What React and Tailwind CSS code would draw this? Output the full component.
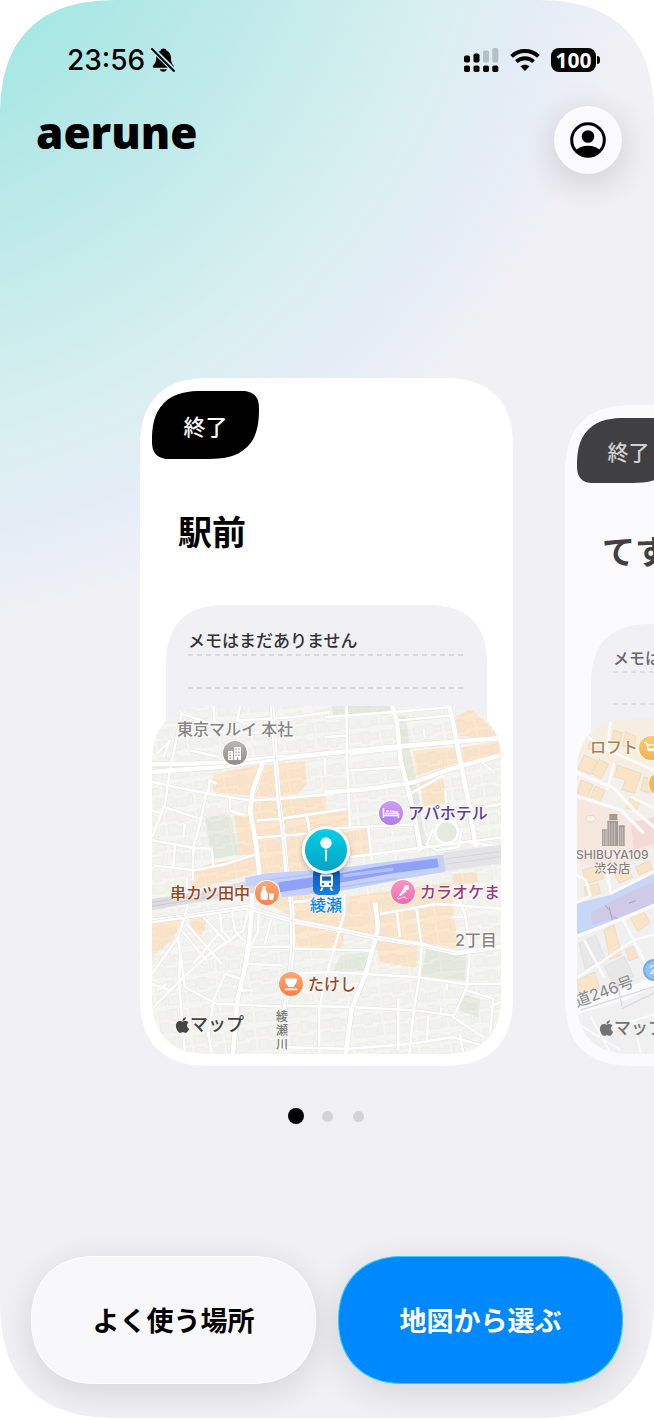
import React from "react";

const squircle = "[corner-shape:superellipse(1.35)]";

const roadsMajor = [
  "M6 214 L200 200 400 172 540 158 720 140 1060 112",
  "M0 192 L110 190 240 186 400 168",
  "M366 10 L372 100 378 190 386 300 400 400 412 540 426 620 428 740 418 840 402 940 392 1070",
  "M338 188 L308 270 300 330 318 430 330 530",
  "M0 662 L110 648 200 634 290 620 430 662 540 682 680 712 800 730 920 758 1060 738",
  "M525 276 L650 266 790 246 900 206 1060 162",
  "M675 605 L684 680 670 740 645 825 605 925 586 1070",
  "M725 10 L740 60 752 180 790 330 812 450",
  "M895 10 L908 60 930 180 955 300 978 440",
  "M310 545 L300 700 285 800 262 900 248 1070",
];

const roadsMinor = [
  "M70 10 L95 40 60 210 45 310 6 410",
  "M95 40 L190 72 M190 10 L195 80 225 100 M270 15 L262 60 300 75 M40 170 L60 120 20 160",
  "M120 150 L210 170 M225 100 L370 95 M262 60 L430 50 540 35",
  "M6 245 L150 275 300 300 M170 275 L150 370 130 440 128 540 M45 320 L150 355",
  "M10 420 L130 442 185 445 190 500 M130 510 L230 490 320 460 M75 430 L70 500 M10 495 L125 508",
  "M300 300 L385 295 550 280 M320 360 L390 355 590 325 M318 412 L400 405 470 400 M470 345 L480 400",
  "M175 275 L178 240 200 250 M105 370 L100 410 M240 290 L240 330 285 345",
  "M525 50 L730 35 900 20 M525 110 L590 105 M590 10 L590 160 600 380",
  "M600 160 L740 145 M600 210 L750 200 M745 60 L900 45 M825 110 L820 85 M525 175 L525 225",
  "M525 385 L660 378 790 372 M655 378 L665 480 M600 470 L830 440 1060 410",
  "M770 285 L880 225 M885 270 L890 310 M990 180 L1025 210 M940 330 L1060 310",
  "M850 385 L830 430 860 450 925 440 935 390 M1050 440 L960 425",
  "M110 530 L112 620 85 710 6 820 M85 720 L105 860 M6 925 L100 830 180 760 280 690 300 610",
  "M95 690 L170 780 M110 670 L215 790 M130 790 L205 700 M160 650 L230 725 M210 640 L215 690 245 720",
  "M245 625 L255 690 280 720 M325 640 L325 690 300 740 M365 650 L345 730 M290 740 L430 738",
  "M105 860 L200 910 395 918 M90 740 L88 860 105 1060 M190 905 L175 1000 185 1060",
  "M225 820 L190 900 M225 820 L270 835 M290 790 L395 795 M270 870 L310 870 M6 850 L60 870",
  "M415 820 L540 815 640 820 800 830 940 850 1060 850 M400 915 L610 920 800 930 910 945",
  "M400 1040 L590 1045 780 1030 910 1010 1050 1050",
  "M585 580 L582 640 560 720 530 820 508 920 508 1060 M690 640 L750 630 860 610 1060 625",
  "M740 630 L750 710 M800 625 L815 740 808 830 790 940 778 1060",
  "M910 560 L945 640 960 740 M905 650 L940 650 M960 760 L950 860 910 950 1000 1010",
  "M745 895 L745 1050 M835 945 L830 1020 M870 945 L875 920 M950 870 L1030 895 1020 1000",
  "M1020 920 L1060 900 M890 850 L890 870 M430 744 L660 750 M930 1000 L940 1060",
  "M6 330 L40 340 M20 870 L50 850 M300 745 L288 800 M430 605 L580 590",
];

const commercial = [
  "188 222 340 190 300 285 190 275",
  "345 195 465 182 470 250 445 280 380 290 315 290",
  "310 300 525 280 530 330 595 325 598 372 470 400 560 500 325 520 310 420",
  "252 345 298 345 314 460 268 465",
  "125 510 180 490 312 465 328 515 120 570",
  "6 660 100 645 70 715 6 770",
  "110 640 170 640 165 690 140 720",
  "320 590 560 580 580 640 580 750 440 735 430 650",
  "915 50 965 25 1060 120 925 105",
  "790 150 912 140 930 185 800 225",
  "935 140 1060 120 1060 160 940 190",
  "810 245 878 225 892 310 820 318",
  "560 396 655 385 662 465 590 478",
  "580 590 900 545 925 745 805 725 800 802 690 785 670 710 580 690",
  "905 520 980 515 985 545 910 555",
];

const parks = [
  "165 350 240 342 268 462 185 475",
  "545 12 730 12 730 34 550 46",
  "738 48 768 46 780 150 800 250 818 380 840 440 800 445 772 270 745 180",
  "572 765 662 755 650 812 550 812",
  "830 745 948 752 945 840 812 828",
  "935 880 990 895 985 950 930 930",
];

function AyaseStreets() {
  return (
    <svg viewBox="6 15 1047 1047" className="block h-full w-full" preserveAspectRatio="xMidYMid slice" aria-hidden="true">
      <defs>
        <pattern id="blocks" width="96" height="84" patternUnits="userSpaceOnUse" patternTransform="rotate(-7)">
          <path d="M6 8h30v22H6zM42 4h22v34H42zM70 12h20v18H70zM8 42h26v30H8zM40 50h34v24H40zM80 42h12v28H80z" fill="#000" fillOpacity=".012" stroke="#54452a" strokeOpacity=".07" strokeWidth="1.5" />
        </pattern>
      </defs>
      <rect width="1070" height="1080" fill="#f5f5f1" />
      {parks.map((p) => <polygon key={p} points={p} fill="#e7ebe0" />)}
      {commercial.map((p) => <polygon key={p} points={p} fill="#fce7cd" />)}
      <rect width="1070" height="1080" fill="url(#blocks)" />
      <g fill="none" strokeLinejoin="round">
        <g stroke="#e0dfda">
          {roadsMinor.map((d) => <path key={d} d={d} strokeWidth="10" />)}
          {roadsMajor.map((d) => <path key={d} d={d} strokeWidth="17" />)}
        </g>
        <g stroke="#fff">
          {roadsMinor.map((d) => <path key={d} d={d} strokeWidth="8" />)}
          {roadsMajor.map((d) => <path key={d} d={d} strokeWidth="14" />)}
        </g>
        <path d="M0 202 L200 194 400 170 M0 662 L290 620 430 662 680 712 920 758 M366 10 L378 190 400 400 426 620 428 740 392 1070" stroke="#e2e1dd" strokeWidth="2" />
      </g>
      <circle cx="890" cy="395" r="34" fill="#e4eade" stroke="#fff" strokeWidth="8" />
      <path d="M0 596 L110 580 300 540 420 545 420 580 300 578 100 612 0 630z" fill="#dddddf" />
      <path d="M0 606 L110 590 300 552 M0 618 L110 601 300 564" stroke="#c9c9ce" strokeWidth="3" fill="none" />
      <path d="M880 456 L1060 432 1060 488 880 512z" fill="#e4e4e6" />
      <path d="M880 476 L1060 452 M880 492 L1060 468" stroke="#d6d6da" strokeWidth="3" />
      <path d="M285 532 L350 518 560 504 880 462 886 514 780 532 600 566 480 582 395 590 390 560 290 556z" fill="#c6d0fb" />
      <path d="M385 545 L560 520 720 492 862 474 866 500 720 520 560 548 390 575z" fill="#8fa2f8" />
      <path d="M580 526 L730 506" stroke="#b0bffb" strokeWidth="10" />
      <path d="M340 540 L560 512 M480 574 L740 534" stroke="#b4c0f8" strokeWidth="4" />
    </svg>
  );
}

function ShibuyaStreets() {
  return (
    <svg viewBox="69 57 1005 1005" className="block h-full w-full" preserveAspectRatio="xMidYMid slice" aria-hidden="true">
      <rect width="1080" height="1080" fill="#f5f1ea" />
      <path d="M60 50h300v220L60 200z" fill="#faeedb" />
      <path d="M60 290 L190 320 300 400 300 440 180 520 60 480z" fill="#f9e4da" />
      <path d="M230 370 L300 350 300 430 240 450z" fill="#f6d2cc" />
      <path d="M60 700 L300 600 300 1070 60 1070z" fill="#f0f0ef" />
      <g fill="#fce0b8" stroke="#dcc39c" strokeWidth="1.5">
        <path d="M90 165l40 18-20 40-38-16zM136 178l28 14-22 44-28-14zM80 240l38 14-18 40-30-12zM124 258l30 14-20 42-30-14zM190 195l72 25-20 60-38-10 10-30-32-10zM180 90l24 8-8 40-26-6zM215 95l32 14-8 36-34-8zM230 290l30 12-14 32-30-10zM270 230l28 10v40l-38-8zM110 120l36 4-10 30-34-8z" />
        <path d="M85 510l50-14 14 40-54 16zM92 560l40-10 8 30-46 14zM180 520l40-16 16 28-40 18zM245 500l40-18 10 26-40 18zM150 690l30-16 22 90-34 14zM222 642l40-22 26 48-36 26zM70 840l52-24 14 48-60 20zM215 750l22-12 14 36-26 8z" />
      </g>
      <path d="M75 730l50-24 28 70-60 30z M150 800l60-30 30 60-60 26z" fill="#e6e6e5" stroke="#d3d3d1" strokeWidth="2" />
      <path d="M60 612 L170 585 300 520 300 620 190 660 60 712z" fill="#b9cff9" />
      <path d="M110 640 L195 590 300 545 300 612 200 650 115 675z" fill="#c4bce5" />
      <path d="M165 620l10 40M163 628l-8-12M176 650l16 6M225 610l20-8" stroke="#6d6796" strokeWidth="2" fill="none" />
      <g fill="none" stroke="#fff" strokeLinejoin="round">
        <path d="M60 215 L180 265 240 330 310 390 M60 285 L200 330 270 400 M60 712 L200 658 310 612" strokeWidth="10" />
        <path d="M100 110 L160 150 310 215 M160 150 L170 60 M180 190 L160 270 M310 330 L230 290 M110 590 L95 540 60 520 M60 612 L105 590 M160 520 L170 580 L310 510 M60 840 L240 720 310 700 M205 655 L280 800 M90 720 L150 830" strokeWidth="8" />
        <path d="M60 930 L200 890 310 840" strokeWidth="30" />
        <path d="M70 970 L200 1050 M110 950 L170 1060 M180 980 L310 940 M240 960 L260 1060" strokeWidth="6" />
      </g>
      <path d="M190 850l14 70M80 930l220-70M205 925l95-46" stroke="#d3d3d4" strokeWidth="4" />
      <ellipse cx="110" cy="356" rx="14" ry="10" fill="#faf5dd" stroke="#d2c7a5" strokeWidth="2" />
      <g fill="#857e72">
        <path d="M166 342h24v18h-24zM160 362h32v76h-32zM144 388h14v50h-14zM194 376h18v62h-18z" />
        <path d="M166 368v68M174 368v68M182 368v68M148 392v44M154 392v44M200 382v54M206 382v54" stroke="#d9d3c8" strokeWidth="2" />
      </g>
    </svg>
  );
}

function Poi({ className, children }) {
  return (
    <span className={`absolute flex size-6 items-center justify-center rounded-full text-white shadow-[0_0_0_1px_rgba(255,255,255,0.9)] ${className}`}>
      {children}
    </span>
  );
}

const labelBase =
  "absolute whitespace-nowrap text-base leading-5 [text-shadow:0_0_2px_#fff,0_0_2px_#fff,0_0_3px_#fff]";

function AppleMaps({ className }) {
  return (
    <span className={`absolute flex items-center font-medium whitespace-nowrap text-[#454545] ${className}`}>
      <svg viewBox="0 0 384 512" className="h-[18px] w-[15px]" fill="currentColor" aria-hidden="true">
        <path d="M318.7 268.7c-.2-36.7 16.4-64.4 50-84.8-18.8-26.9-47.2-41.7-84.7-44.6-35.5-2.8-74.3 20.7-88.5 20.7-15 0-49.4-19.7-76.4-19.7C63.3 141.2 4 184.8 4 273.5q0 39.3 14.4 81.2c12.8 36.7 59 126.7 107.2 125.2 25.2-.6 43-17.9 75.8-17.9 31.8 0 48.3 17.9 76.4 17.9 48.6-.7 90.4-82.5 102.6-119.3-65.2-30.7-61.7-90-61.7-91.9zm-56.6-164.2c27.3-32.4 24.8-61.9 24-72.5-24.1 1.4-52 16.4-67.9 34.9-17.5 19.8-27.8 44.3-25.6 71.9 26.1 2 49.9-11.4 69.5-34.3z" />
      </svg>
      マップ
    </span>
  );
}

function AyaseMap() {
  return (
    <div className={`relative h-[348px] overflow-hidden rounded-[60px] ${squircle}`}>
      <AyaseStreets />
      <span className={`${labelBase} top-[13px] left-[25px] font-medium text-[#858585]`}>東京マルイ 本社</span>
      <Poi className="top-[35px] left-[71px] bg-linear-to-b from-[#b9b7b5] to-[#8f8c89]">
        <svg viewBox="0 0 16 16" className="size-4" fill="#fff" aria-hidden="true">
          <path fillRule="evenodd" d="M1 6h5v9H1zM7 2h7v13H7zM2.4 7.4v1.2h1.8V7.4zM2.4 10v1.2h1.8V10zM2.4 12.5v1.2h1.8v-1.2zM8.4 3.5v1.5h1.4V3.5zM11.2 3.5v1.5h1.4V3.5zM8.4 6.5v1.5h1.4V6.5zM11.2 6.5v1.5h1.4V6.5zM8.4 9.5v1.5h1.4V9.5zM11.2 9.5v1.5h1.4V9.5zM9.8 12.5v2.5h1.4v-2.5z" />
        </svg>
      </Poi>
      <Poi className="top-[95px] left-[227px] bg-linear-to-b from-[#cfa0f5] to-[#ad7ce6]">
        <svg viewBox="0 0 18 12" className="h-3 w-[18px]" fill="none" stroke="#fff" strokeWidth="1.5" aria-hidden="true">
          <path d="M1.5 1v10M1.5 8.5h15M16.5 6.5V11M3 6.5h13.5" />
          <path d="M4 4.3h3M8 4.3l8 .8" />
        </svg>
      </Poi>
      <span className={`${labelBase} top-[97px] left-[256px] font-medium text-[#5b3d96]`}>アパホテル</span>
      <span className={`${labelBase} top-[177px] left-[18px] font-medium text-[#97461f]`}>串カツ田中</span>
      <Poi className="top-[175px] left-[103px] bg-linear-to-b from-[#ffa774] to-[#fa8148]">
        <svg viewBox="0 0 16 16" className="size-4" fill="#fff" aria-hidden="true">
          <path d="M3.5 1h3.2v3.5c0 1 2 2.2 2 4.5v4.5c0 .8-.6 1.5-1.4 1.5H3c-.8 0-1.4-.7-1.4-1.5V9c0-2.3 1.9-3.5 1.9-4.5zM9.8 8.5h5.2l-.6 5.5c-.1.6-.5 1-1 1h-2c-.5 0-.9-.4-1-1z" />
        </svg>
      </Poi>
      <Poi className="top-[174px] left-[239px] bg-linear-to-b from-[#fc94c8] to-[#f06cac]">
        <svg viewBox="0 0 16 16" className="size-4" fill="#fff" aria-hidden="true">
          <circle cx="11.5" cy="3.5" r="2.6" />
          <path d="M8.7 4.2l2.9 2.9-6.2 5.2-1.3-1.3z" />
          <path d="M4.5 11.5c-3 2.5-2 4 1 2.8s5-2 6.5.7" fill="none" stroke="#fff" strokeWidth="1" />
        </svg>
      </Poi>
      <span className={`${labelBase} top-[176px] left-[268px] font-medium text-[#9c3b78]`}>カラオケま</span>
      <span className="absolute top-[162px] left-[161px] flex h-[27px] w-[27px] items-end justify-center rounded-md bg-linear-to-b from-[#0d54ad] to-[#1680ea] pb-[3px]">
        <svg viewBox="0 0 16 16" className="size-[19px]" fill="#fff" aria-hidden="true">
          <path fillRule="evenodd" d="M4 1h8c1 0 1.5.7 1.5 1.5V10c0 1-.7 1.7-1.5 1.7H4c-.8 0-1.5-.7-1.5-1.7V2.5C2.5 1.7 3 1 4 1zm.3 2v3.5h7.4V3zM5 8.3a1 1 0 1 0 .01 0zM11 8.3a1 1 0 1 0 .01 0z" />
          <path d="M3.8 12.2h1.8l-1.4 3H2.4zM12.2 12.2h-1.8l1.4 3h1.8z" />
        </svg>
      </span>
      <span className="absolute top-[120px] left-[150px] flex size-12 items-center justify-center rounded-full border-[3px] border-white bg-linear-to-b from-[#00cfe6] to-[#05a3c4] shadow-[0_2px_5px_rgba(0,0,0,0.25)]">
        <svg viewBox="0 0 14 28" className="h-7 w-[14px]" fill="#fff" aria-hidden="true">
          <circle cx="7" cy="7" r="5.7" />
          <path d="M5.9 13.5h2.2l-.3 11c-.2 1.5-1.4 1.5-1.6 0z" />
        </svg>
      </span>
      <span className={`${labelBase} top-[189px] left-[158px] font-medium text-[#0a84e8]`}>綾瀬</span>
      <Poi className="top-[266px] left-[127px] bg-linear-to-b from-[#ffa774] to-[#fa8148]">
        <svg viewBox="0 0 16 16" className="size-4" fill="#fff" aria-hidden="true">
          <path d="M2 2.5h12c0 4-1.5 6-3 7.2V11H5V9.7C3.5 8.5 2 6.5 2 2.5zM1.8 12.5h12.4v1.8H1.8z" />
        </svg>
      </Poi>
      <span className={`${labelBase} top-[268px] left-[156px] font-medium text-[#97461f]`}>たけし</span>
      <span className={`${labelBase} top-[224px] left-[303px] font-medium text-[#858585]`}>2丁目</span>
      <span className="absolute top-[304px] left-[124px] w-3 text-xs leading-[14px] font-medium text-[#777] [text-shadow:0_0_2px_#fff]">綾瀬川</span>
      <AppleMaps className="top-[307px] left-[23px] text-lg leading-6" />
    </div>
  );
}

function ShibuyaMap() {
  return (
    <div className={`relative h-[335px] overflow-hidden rounded-[58px] ${squircle}`}>
      <ShibuyaStreets />
      <span className={`${labelBase} top-[18px] left-[13px] font-medium text-[#8a5a10]`}>ロフト</span>
      <Poi className="top-[17px] left-[62px] bg-linear-to-b from-[#ffbe3d] to-[#f79a14]">
        <svg viewBox="0 0 16 16" className="size-4" fill="none" stroke="#fff" strokeWidth="1.6" aria-hidden="true">
          <path d="M1 2.5h2.5l2 8h7.5M4.5 5h10l-1.5 4H5.5M6.5 13.5h.1M12 13.5h.1" />
        </svg>
      </Poi>
      <Poi className="top-[53px] left-[72px] bg-[#f9a01c]" />
      <span className="absolute top-[129px] left-[-1px] flex flex-col items-center text-xs leading-[14px] font-medium whitespace-nowrap text-[#5f594f] [text-shadow:0_0_2px_#fff,0_0_2px_#fff]">
        <span>SHIBUYA109</span>
        <span>渋谷店</span>
      </span>
      <span className="absolute top-[262px] left-[-4px] -rotate-[20deg] text-base leading-5 whitespace-nowrap text-[#666]">道246号</span>
      <span className="absolute top-[240px] left-[66px] flex h-[22px] w-7 items-center rounded-full border-2 border-[#4a93ea] bg-[#6eb2f6] pl-1 text-xs text-white">246</span>
      <AppleMaps className="top-[297px] left-[22px] text-[17px] leading-6" />
    </div>
  );
}

const dashes = "h-[2px] bg-[repeating-linear-gradient(90deg,#d7d6dc_0_5px,transparent_5px_9px)]";

function PlaceCard({ active, title, children }) {
  const s = active
    ? {
        card: "w-[373px] rounded-[72px]",
        badge: "h-[68px] w-[107px] pt-1 text-[22px] text-white",
        title: "mt-[54px] ml-[26px] text-[34px]",
        memo: "mt-[52px] pt-6 mx-[14px] text-[17px]",
        gap: "mt-[31px]",
        map: "-mt-[49px]",
      }
    : {
        card: "w-[359px] rounded-[70px] opacity-[0.73]",
        badge: "h-[65px] w-[103px] pt-1 text-[21px] text-[#c4c4c4]",
        title: "mt-[49px] ml-[25px] text-[33px]",
        memo: "mt-[52px] pt-[22px] mx-[14px] text-[16px]",
        gap: "mt-[30px]",
        map: "-mt-[52px]",
      };
  return (
    <article className={`flex shrink-0 flex-col bg-white px-3 pt-[13px] pb-3 ${squircle} ${s.card}`}>
      <span className={`flex items-center justify-center rounded-tl-[50px] rounded-tr-[18px] rounded-br-[50px] rounded-bl-[18px] bg-black font-medium ${squircle} ${s.badge}`}>
        終了
      </span>
      <h2 className={`leading-10 font-bold whitespace-nowrap text-black ${s.title}`}>{title}</h2>
      <section className={`rounded-t-[62px] bg-[#f1f0f5] px-[22px] pb-[66px] ${squircle} ${s.memo}`}>
        <p className="leading-6 font-medium text-[#333]">メモはまだありません</p>
        <div className={`mt-px ${dashes}`} />
        <div className={`${s.gap} ${dashes}`} />
      </section>
      <div className={s.map}>{children}</div>
    </article>
  );
}

function StatusBar() {
  return (
    <div className="flex h-[28px] items-center justify-between pr-[54px] pl-[67px] font-[Inter,sans-serif]">
      <div className="flex items-center gap-[6px]">
        <span className="text-[28px] leading-7 font-medium">23:56</span>
        <svg viewBox="0 0 24 26" className="h-[26px] w-6" aria-label="消音">
          <path d="M12.5 1.5c1.7 0 2.9.9 3.1 2.2 3 1.1 4.4 3.7 4.4 7 0 4.6 1.2 6.3 2.6 8 .6.9.3 2-.7 2H2.7c-1 0-1.3-1.1-.7-2 1.8-2.2 3.2-3.5 3.2-8 0-3.3 1.4-5.9 4.3-7 .2-1.3 1.4-2.2 3-2.2zM8.8 22.3h7c-.3 1.6-1.7 2.5-3.5 2.5s-3.2-.9-3.5-2.5z" />
          <path d="M1.5 2L24 24.5" stroke="#b9e8e8" strokeWidth="5" />
          <path d="M1 2L23 24" stroke="#000" strokeWidth="1.9" strokeLinecap="round" />
        </svg>
      </div>
      <div className="flex items-center">
        <svg viewBox="0 0 35 25" className="h-[25px] w-[35px]" aria-label="電波">
          <rect x="0" y="7.5" width="6" height="7" rx="1.8" />
          <rect x="9.5" y="5.5" width="6" height="9" rx="1.8" />
          <rect x="19" y="2.5" width="6" height="12" rx="1.8" fill="#b5c0c6" />
          <rect x="28.3" y="0" width="6" height="14.5" rx="1.8" fill="#b5c0c6" />
          <rect x="0" y="17.5" width="6" height="6.5" rx="1.8" />
          <rect x="9.5" y="17.5" width="6" height="6.5" rx="1.8" />
          <rect x="19" y="17.5" width="6" height="6.5" rx="1.8" />
          <rect x="28.3" y="17.5" width="6" height="6.5" rx="1.8" />
        </svg>
        <svg viewBox="0 0 30 22" className="ml-[11px] h-[22px] w-[30px]" aria-label="Wi-Fi">
          <path d="M15 22l-4.6-4.7c2.5-2.2 6.7-2.2 9.2 0z" />
          <path d="M1.6 7.4c7.4-7.2 19.4-7.2 26.8 0M6.4 12.7c4.8-4.6 12.4-4.6 17.2 0" fill="none" stroke="#000" strokeWidth="3.9" />
        </svg>
        <span className="ml-[11px] flex h-6 w-[45px] items-center justify-center rounded-lg bg-black font-[Open_Sans,sans-serif] text-[21px] leading-6 font-bold text-white">100</span>
        <span className="ml-px h-2 w-[3px] rounded-r-full bg-black" />
      </div>
    </div>
  );
}

export default function App() {
  return (
    <div className="bg-white pb-[2px] font-[Inter,'Noto_Sans_CJK_JP',sans-serif] text-black">
      <main
        className={`flex w-full flex-col overflow-hidden rounded-[122px] bg-[#f1f0f5] bg-[radial-gradient(circle_at_-150px_-160px,#a5e7e4_250px,#bbe9e8_400px,#c9ecec_500px,#daeff1_620px,#e3ecf5_700px,#e9eef7_745px,#f1f0f5_800px)] pt-[46px] pb-[34px] ${squircle}`}
      >
        <StatusBar />
        <header className="mt-8 flex h-[68px] items-center justify-between pr-8 pl-9">
          <h1 className="pb-4 font-[Open_Sans,sans-serif] text-[44px] leading-[48px] font-extrabold">
            aerune
          </h1>
          <button type="button" aria-label="プロフィール" className="flex size-[68px] items-center justify-center rounded-full bg-[#fbfbfd] shadow-[0_8px_36px_rgba(0,0,0,0.16)]">
            <svg viewBox="0 0 36 36" className="size-9" aria-hidden="true">
              <defs>
                <clipPath id="avatar"><circle cx="18" cy="18" r="17" /></clipPath>
              </defs>
              <g clipPath="url(#avatar)">
                <path d="M5 29c3-3.5 8-5.2 13-5.2s10 1.7 13 5.2v8H5z" />
              </g>
              <circle cx="18" cy="14.5" r="6.3" />
              <circle cx="18" cy="18" r="16.3" fill="none" stroke="#000" strokeWidth="3" />
            </svg>
          </button>
        </header>

        <div className="mt-[204px] flex items-end gap-[52px] overflow-hidden pl-[140px]">
          <PlaceCard active title="駅前"><AyaseMap /></PlaceCard>
          <PlaceCard title="てすと"><ShibuyaMap /></PlaceCard>
        </div>

        <nav aria-label="ページ" className="mt-[42px] flex h-4 justify-center gap-[15px]">
          <button type="button" aria-label="1" className="size-4 rounded-full bg-black" />
          <button type="button" aria-label="2" className="flex size-4 items-center justify-center"><span className="size-[11px] rounded-full bg-[#d4d3d8]" /></button>
          <button type="button" aria-label="3" className="flex size-4 items-center justify-center"><span className="size-[11px] rounded-full bg-[#d4d3d8]" /></button>
        </nav>

        <div className="mt-[132px] grid grid-cols-2 gap-[22px] px-[31px] text-[27px]">
          <button type="button" className="h-32 rounded-[70px] border border-white bg-[#f8f8fb] pt-1 font-bold text-black shadow-[0_8px_36px_rgba(0,0,0,0.12)] [corner-shape:superellipse(1.15)]">
            よく使う場所
          </button>
          <button type="button" className="h-32 rounded-[70px] border border-[#2fd0ff] bg-[#0088ff] pt-1 font-bold text-white shadow-[0_8px_36px_rgba(0,0,0,0.12)] [corner-shape:superellipse(1.15)]">
            地図から選ぶ
          </button>
        </div>
      </main>
    </div>
  );
}
